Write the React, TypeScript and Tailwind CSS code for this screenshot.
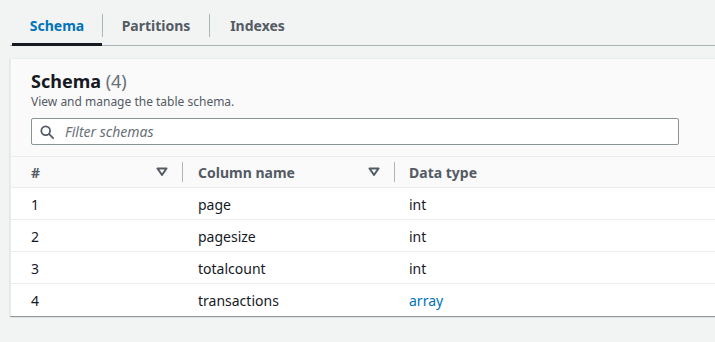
import React from "react";

const rows = [
  { id: 1, name: "page", type: "int" },
  { id: 2, name: "pagesize", type: "int" },
  { id: 3, name: "totalcount", type: "int" },
  { id: 4, name: "transactions", type: "array" },
];

const SortIcon = () => (
  <svg width="12" height="10" viewBox="0 0 12 10" className="text-[#545b64]">
    <polygon points="1.5,1.5 10.5,1.5 6,8" fill="none" stroke="currentColor" strokeWidth="2" strokeLinejoin="round" />
  </svg>
);

const Divider = () => <div className="w-px h-[20px] bg-[#aab7b8] shrink-0"></div>;

const App = () => {
  return (
    <div className="w-[715px] h-[342px] overflow-hidden bg-[#f2f3f3] font-['Noto_Sans',sans-serif] text-[#16191f]">
      {/* tabs */}
      <div className="ml-[10px] pt-[6px] flex items-stretch border-b border-[#aab7b8] h-[46px]">
        <div className="ml-[2px] w-[90px] flex items-center justify-center text-[14px] font-bold text-[#0073bb] border-b-[3px] border-[#16191f] -mb-px pt-[2px]">
          Schema
        </div>
        <div className="w-px bg-[#aab7b8] my-[8px]"></div>
        <div className="w-[106px] flex items-center justify-center text-[14px] font-bold text-[#545b64]">
          Partitions
        </div>
        <div className="w-px bg-[#aab7b8] my-[8px]"></div>
        <div className="w-[95px] flex items-center justify-center text-[14px] font-bold text-[#545b64]">
          Indexes
        </div>
      </div>

      {/* card */}
      <div className="ml-[10px] mt-[12px] w-[720px] bg-white border-l border-t border-[#eaeded] shadow-[0_1px_1px_0_rgba(0,28,36,0.3),1px_1px_1px_0_rgba(0,28,36,0.15)]">
        <div className="bg-[#fafafa] px-[20px] pt-[10px] pb-[11px]">
          <h2 className="text-[18px] font-bold leading-[24px]">
            Schema <span className="font-normal text-[#687078]">(4)</span>
          </h2>
          <p className="text-[12px] leading-[16px] text-[#545b64] mt-[1px]">View and manage the table schema.</p>
          <div className="mt-[8px] w-[648px] h-[27px] bg-white border border-[#879596] rounded-[2px] flex items-center pl-[8px]">
            <svg width="14" height="14" viewBox="0 0 16 16" fill="none" stroke="#545b64" strokeWidth="2" strokeLinecap="round">
              <circle cx="6.5" cy="6.5" r="5" />
              <path d="M10.5 10.5 15 15" />
            </svg>
            <span className="ml-[11px] text-[14px] italic text-[#687078]">Filter schemas</span>
          </div>
        </div>
        <table className="w-full border-collapse text-[14px]">
          <thead>
            <tr className="bg-[#fafafa] border-t border-b border-[#eaeded] h-[31px]">
              <th className="w-[171px] p-0 text-left font-bold text-[#545b64]">
                <div className="flex items-center justify-between pl-[20px] pr-[14px]">
                  <span>#</span>
                  <SortIcon />
                </div>
              </th>
              <th className="w-[212px] p-0 text-left font-bold text-[#545b64]">
                <div className="flex items-center">
                  <Divider />
                  <div className="flex-1 flex items-center justify-between pl-[15px] pr-[14px]">
                    <span>Column name</span>
                    <SortIcon />
                  </div>
                </div>
              </th>
              <th className="p-0 text-left font-bold text-[#545b64]">
                <div className="flex items-center">
                  <Divider />
                  <span className="pl-[14px]">Data type</span>
                </div>
              </th>
            </tr>
          </thead>
          <tbody>
            {rows.map((r, i) => (
              <tr key={r.id} className={`h-[32px] ${i < rows.length - 1 ? "border-b border-[#eaeded]" : ""}`}>
                <td className="pl-[20px] pt-[2px]">{r.id}</td>
                <td className="pl-[16px] pt-[2px]">{r.name}</td>
                <td className={`pl-[15px] pt-[2px] ${r.type === "array" ? "text-[#0073bb]" : ""}`}>{r.type}</td>
              </tr>
            ))}
          </tbody>
        </table>
      </div>
    </div>
  );
};

export default App;
